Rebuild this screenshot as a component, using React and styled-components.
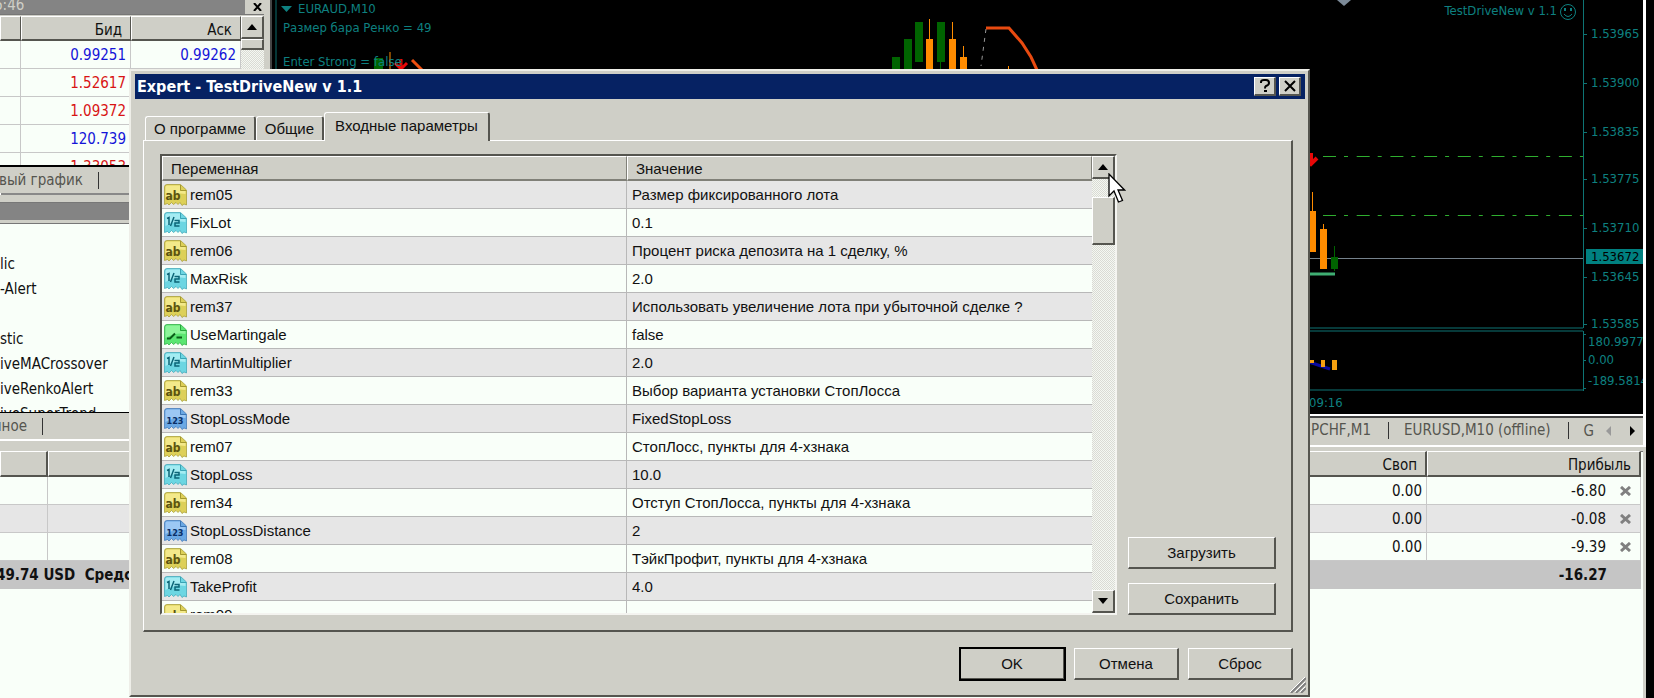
import React, { useState } from 'react';
import styled, { createGlobalStyle, css } from 'styled-components';

const quotes = [
  { bid: '0.99251', ask: '0.99262', up: true },
  { bid: '1.52617', up: false },
  { bid: '1.09372', up: false },
  { bid: '120.739', up: true },
  { bid: '1.33053', up: false },
];

const navItems = [
  '',
  'lic',
  '-Alert',
  '',
  'stic',
  'iveMACrossover',
  'iveRenkoAlert',
  'iveSuperTrend',
];

const params = [
  { type: 'ab', name: 'rem05', value: 'Размер фиксированного лота' },
  { type: 'half', name: 'FixLot', value: '0.1' },
  { type: 'ab', name: 'rem06', value: 'Процент риска депозита на 1 сделку, %' },
  { type: 'half', name: 'MaxRisk', value: '2.0' },
  {
    type: 'ab',
    name: 'rem37',
    value: 'Использовать увеличение лота при убыточной сделке ?',
  },
  { type: 'bool', name: 'UseMartingale', value: 'false' },
  { type: 'half', name: 'MartinMultiplier', value: '2.0' },
  { type: 'ab', name: 'rem33', value: 'Выбор варианта установки СтопЛосса' },
  { type: 'int', name: 'StopLossMode', value: 'FixedStopLoss' },
  { type: 'ab', name: 'rem07', value: 'СтопЛосс, пункты для 4-хзнака' },
  { type: 'half', name: 'StopLoss', value: '10.0' },
  {
    type: 'ab',
    name: 'rem34',
    value: 'Отступ СтопЛосса, пункты для 4-хзнака',
  },
  { type: 'int', name: 'StopLossDistance', value: '2' },
  { type: 'ab', name: 'rem08', value: 'ТэйкПрофит, пункты для 4-хзнака' },
  { type: 'half', name: 'TakeProfit', value: '4.0' },
  { type: 'ab', name: 'rem09', value: '' },
];

const orders = [
  { swap: '0.00', profit: '-6.80' },
  { swap: '0.00', profit: '-0.08' },
  { swap: '0.00', profit: '-9.39' },
];

const prices = [
  ['1.53965', 34],
  ['1.53900', 83],
  ['1.53835', 132],
  ['1.53775', 179],
  ['1.53710', 228],
  ['1.53645', 277],
  ['1.53585', 324],
];

const tabs = ['О программе', 'Общие', 'Входные параметры'];

const iconColors = {
  ab: ['#f3e98a', '#ddd058', '#a3982f', '#5c5410'],
  half: ['#a4ecf2', '#6cd6e2', '#3aa3b4', '#0c6577'],
  bool: ['#8df59a', '#5be672', '#27a63c', '#0a5c18'],
  int: ['#9cc8f4', '#6aa8e4', '#3a74b4', '#0a2f66'],
};
const iconLabels = { ab: 'ab', int: '123' };

function ParamIcon({ type }) {
  const [light, base, edge, ink] = iconColors[type];
  return (
    <svg width="23" height="22" viewBox="0 0 23 22" aria-hidden="true">
      <path
        d="M3 .5H16.500L22.500 6V21L20 20L18 21.500L16 18.500L14 20.500L12 18.500L9.500 20.500L7.500 18.500L5 21L3.500 19.500L.5 20.500V3Q.5.5 3 .5Z"
        fill={base}
        stroke={edge}
        strokeOpacity="0.7"
      />
      <path d="M3 1.500H16V7H21.500V10Q12 8 1.500 14V3Q1.500 1.500 3 1.500Z" fill={light} />
      <path d="M16.500 1V6.500H22" fill="none" stroke={edge} />
      {type === 'bool' && (
        <path d="M3 14.500H6L11 9.500M12.500 13.500H18" fill="none" stroke={ink} strokeWidth="2" />
      )}
      {type === 'half' && (
        <path
          d="M3 6.500L5 5.500V13M10 5L6.500 14M10.500 8.500H15V11H11V14H15.500"
          fill="none"
          stroke={ink}
          strokeWidth="1.500"
        />
      )}
      {(type === 'ab' || type === 'int') && (
        <text
          x={type === 'ab' ? 9 : 11}
          y="16"
          textAnchor="middle"
          fontFamily="DejaVu Sans Condensed, DejaVu Sans, sans-serif"
          fontWeight="bold"
          fontSize={type === 'ab' ? 12 : 9}
          fill={ink}
        >
          {iconLabels[type]}
        </text>
      )}
    </svg>
  );
}

function Arrow({ dir = 'up' }) {
  const shapes = {
    up: 'M0 6H10L5 0Z',
    down: 'M0 0H10L5 6Z',
  };
  return (
    <svg width="10" height="6" viewBox="0 0 10 6" aria-hidden="true">
      <path d={shapes[dir]} fill="#000" />
    </svg>
  );
}

function Chart() {
  return (
    <ChartSvg>
      {/* left edge of the chart */}
      <path d="M4 0V414" stroke="#0c6c6c" />
      <rect x="102" y="58" width="9" height="14" fill="#006400" />
      <path d="M118 52V72" stroke="#ff8c00" />
      <path d="M129 59V70M123 63L129 69L135 63" fill="none" stroke="#e80808" strokeWidth="3" />
      <path d="M140 60L152 72" stroke="#f05010" strokeWidth="3" />
      <g fill="#0e8080">
        <path d="M9 6H20L14.500 12Z" />
        <text x="26" y="13">EURAUD,M10</text>
        <text x="11" y="32">Размер бара Ренко = 49</text>
        <text x="11" y="66">Enter Strong = false</text>
      </g>

      <g fill="#006400">
        <rect x="620" y="57" width="8" height="14" />
        <rect x="632" y="39" width="8" height="32" />
        <rect x="643" y="22" width="8" height="40" />
        <rect x="665" y="22" width="8" height="40" />
        <rect x="668" y="62" width="1" height="9" />
      </g>
      <g fill="#ff8c00">
        <rect x="654" y="39" width="7" height="32" />
        <rect x="657" y="19" width="1" height="20" />
        <rect x="677" y="39" width="7" height="32" />
        <rect x="680" y="22" width="1" height="17" />
        <rect x="688" y="57" width="7" height="14" />
        <rect x="691" y="46" width="1" height="11" />
        <rect x="736" y="66" width="1" height="5" />
      </g>
      <path d="M714 29L709 66" stroke="#999" strokeDasharray="4 5" fill="none" />
      <path d="M714 28H737L750 43L759 57L765 70" stroke="#e84a10" strokeWidth="3" fill="none" />

      {/* frames of the main and the indicator window */}
      <g stroke="#0e7474" transform="translate(-60 0)">
        <line x1="64" x2="100%" y1="328" y2="328" />
        <line x1="64" x2="100%" y1="331" y2="331" />
        <line x1="64" x2="100%" y1="390" y2="390" />
      </g>

      {/* everything that is tied to the price scale */}
      <svg x="100%" y="0" overflow="visible">
        <path d="M-306 0H-292L-299 6Z" fill="#7c8a98" />
        <path
          d="M-320 156.500H-60M-320 215.500H-60"
          stroke="#2fae2f"
          strokeDasharray="13 8 4 8.700"
        />
        <path d="M-344 258.500H-60" stroke="#75828c" />
        <path d="M-344 274H-308" stroke="#3fae72" strokeWidth="3" />
        <path
          d="M-332 153V163M-339 157L-332 164L-326 158"
          stroke="#e80808"
          strokeWidth="4"
          fill="none"
        />
        <g fill="#ff8c00">
          <rect x="-335" y="211" width="8" height="41" />
          <rect x="-331" y="192" width="1" height="19" />
          <rect x="-323" y="229" width="7" height="40" />
          <rect x="-320" y="224" width="1" height="5" />
        </g>
        <g fill="#006400">
          <rect x="-312" y="257" width="7" height="12" />
          <rect x="-309" y="246" width="1" height="25" />
        </g>
        <path d="M-340 360L-328 364L-313 369" stroke="#0a0aa0" strokeWidth="3" fill="none" />
        <g fill="#f5a010">
          <rect x="-340" y="360" width="11" height="3" />
          <rect x="-322" y="360" width="4" height="7" />
          <rect x="-311" y="360" width="5" height="10" />
        </g>
        <g stroke="#0e7474" fill="none">
          <path d="M-59.500 0V328M-59.500 331V391" />
          {prices.map(([label, y]) => (
            <path key={label} d={`M-59 ${y}.500H-56`} />
          ))}
          <path d="M-59 334.500H-57M-59 360.500H-57M-59 388.500H-57" />
        </g>
        <rect x="-57" y="249" width="57" height="15" fill="#008080" />
        <g fill="#0e8080">
          {prices.map(([label, y]) => (
            <text key={label} x="-52" y={y + 4}>
              {label}
            </text>
          ))}
          <text x="-55" y="346">180.9977</text>
          <text x="-55" y="364">0.00</text>
          <text x="-55" y="385">-189.5814</text>
          <text x="-334" y="407">09:16</text>
          <text x="-86" y="15" textAnchor="end">
            TestDriveNew v 1.1
          </text>
        </g>
        <text x="-52" y="261" fill="#000">1.53672</text>
        <g fill="none" stroke="#0e8080">
          <circle cx="-75" cy="12" r="7.500" />
          <path d="M-79 14Q-75 19 -71 14" />
        </g>
        <path d="M-79 8H-77V11H-79ZM-73 8H-71V11H-73Z" fill="#0e8080" />
      </svg>
    </ChartSvg>
  );
}

export default function App() {
  const [activeTab, setActiveTab] = useState(2);

  return (
    <>
      <GlobalStyle />
      <Page>
        <Workspace>
          <Sidebar>
            <PanelTitle>
              <TitleText>6:46</TitleText>
              <PlainButton aria-label="Закрыть">
                <svg width="9" height="8" viewBox="0 0 9 8">
                  <path d="M1 0L8 8M8 0L1 8" stroke="#000" strokeWidth="2" />
                </svg>
              </PlainButton>
            </PanelTitle>
            <MarketWatch>
              <QuoteTable>
                <thead>
                  <tr>
                    <th aria-label="Символ" />
                    <th>Бид</th>
                    <th>Аск</th>
                  </tr>
                </thead>
                <tbody>
                  {quotes.map(quote => (
                    <QuoteRow key={quote.bid} $up={quote.up}>
                      <td />
                      <td>{quote.bid}</td>
                      <td>{quote.ask}</td>
                    </QuoteRow>
                  ))}
                </tbody>
              </QuoteTable>
              <ScrollBar>
                <ScrollButton aria-label="Вверх">
                  <Arrow />
                </ScrollButton>
                <Thumb $height={11} />
              </ScrollBar>
            </MarketWatch>
            <PanelTabs>
              <PanelTab $width={99}>вый график</PanelTab>
            </PanelTabs>
            <NavTitle />
            <NavList>
              {navItems.map((item, index) => (
                <li key={index}>{item}</li>
              ))}
            </NavList>
            <PanelTabs>
              <PanelTab $width={43}>нное</PanelTab>
            </PanelTabs>
          </Sidebar>
          <ChartColumn>
            <Chart />
            <ChartTabs>
              <PanelTab>PCHF,M1</PanelTab>
              <PanelTab>EURUSD,M10 (offline)</PanelTab>
              <ChartTabEnd>G</ChartTabEnd>
              <PlainButton aria-label="Назад">
                <svg width="5" height="10" viewBox="0 0 5 10">
                  <path d="M5 0V10L0 5Z" fill="#999" />
                </svg>
              </PlainButton>
              <PlainButton aria-label="Вперед">
                <svg width="5" height="10" viewBox="0 0 5 10">
                  <path d="M0 0V10L5 5Z" fill="#000" />
                </svg>
              </PlainButton>
            </ChartTabs>
          </ChartColumn>
        </Workspace>

        <Terminal>
          <OrderTable>
            <colgroup>
              <col width="48" />
              <col />
              <col width="300" />
              <col width="214" />
            </colgroup>
            <thead>
              <tr>
                <th />
                <th />
                <th>Своп</th>
                <th>Прибыль</th>
              </tr>
            </thead>
            <tbody>
              {orders.map(order => (
                <tr key={order.profit}>
                  <td />
                  <td />
                  <td>{order.swap}</td>
                  <td>
                    <Profit>
                      {order.profit}
                      <PlainButton aria-label="Закрыть ордер">
                        <svg width="11" height="10" viewBox="0 0 11 10">
                          <path d="M1 1L10 9M10 1L1 9" stroke="#808080" strokeWidth="3" />
                        </svg>
                      </PlainButton>
                    </Profit>
                  </td>
                </tr>
              ))}
            </tbody>
            <tfoot>
              <tr>
                <Balance colSpan="3">49.74 USD&nbsp; Средства</Balance>
                <td>
                  <Total>-16.27</Total>
                </td>
              </tr>
            </tfoot>
          </OrderTable>
        </Terminal>

        <Dialog role="dialog" aria-labelledby="dialog-title">
          <DialogTitle>
            <h1 id="dialog-title">Expert - TestDriveNew v 1.1</h1>
            <CaptionButton aria-label="Справка">
              <svg width="12" height="14" viewBox="0 0 12 14">
                <path
                  d="M2 4V3Q2 1 5 1H7Q10 1 10 4Q10 6 7 7Q6 7.500 6 9.500"
                  fill="none"
                  stroke="#000"
                  strokeWidth="2"
                />
                <rect x="5" y="11" width="3" height="2" />
              </svg>
            </CaptionButton>
            <CaptionButton aria-label="Закрыть">
              <svg width="12" height="12" viewBox="0 0 12 12">
                <path d="M1 1L11 11M11 1L1 11" stroke="#000" strokeWidth="2" />
              </svg>
            </CaptionButton>
          </DialogTitle>

          <TabList role="tablist">
            {tabs.map((tab, index) => (
              <Tab
                key={tab}
                role="tab"
                aria-selected={activeTab === index}
                $active={activeTab === index}
                onClick={() => setActiveTab(index)}
              >
                {tab}
              </Tab>
            ))}
          </TabList>

          <TabPanel role="tabpanel">
            <ListBox>
              <TableClip>
                <ParamTable>
                  <thead>
                    <tr>
                      <th>Переменная</th>
                      <th>Значение</th>
                    </tr>
                  </thead>
                  <tbody>
                    {params.map(param => (
                      <tr key={param.name}>
                        <td>
                          <ParamName>
                            <ParamIcon type={param.type} />
                            {param.name}
                          </ParamName>
                        </td>
                        <td>{param.value}</td>
                      </tr>
                    ))}
                  </tbody>
                </ParamTable>
              </TableClip>
              <ScrollBar>
                <ScrollButton aria-label="Вверх">
                  <Arrow />
                </ScrollButton>
                <Track />
                <Thumb $height={48} />
                <Spacer />
                <ScrollButton aria-label="Вниз">
                  <Arrow dir="down" />
                </ScrollButton>
              </ScrollBar>
            </ListBox>
            <SideButtons>
              <Button>Загрузить</Button>
              <Button>Сохранить</Button>
            </SideButtons>
          </TabPanel>

          <DialogFooter>
            <Button $primary>OK</Button>
            <Button>Отмена</Button>
            <Button>Сброс</Button>
          </DialogFooter>
          <Grip width="16" height="16" viewBox="0 0 16 16">
            <path d="M1 16L16 1M6 16L16 6M11 16L16 11" stroke="#808080" strokeWidth="2" />
            <path d="M0 15L15 0M5 15L15 5M10 15L15 10" stroke="#fff" />
          </Grip>
        </Dialog>

        <Cursor width="18" height="31" viewBox="0 0 18 31">
          <path
            d="M1 1V23L6 18L10.500 29L14.500 27.500L10 17H16.500Z"
            fill="#fff"
            stroke="#000"
            strokeWidth="1.300"
          />
        </Cursor>
      </Page>
    </>
  );
}

const face = '#cfcfc7';
const paper = '#f9fff9';
const tahoma = "'DejaVu Sans Condensed', 'DejaVu Sans', sans-serif";
const sans = "'Liberation Sans', Arial, sans-serif";

const GlobalStyle = createGlobalStyle`
  * {
    box-sizing: border-box;
  }

  body {
    margin: 0;
    overflow: hidden;
    background: #000;
    color: #111;
    font-family: ${tahoma};
    font-size: 15px;
  }

  button {
    font: inherit;
    color: inherit;
  }

  table {
    width: 100%;
    border-collapse: separate;
    border-spacing: 0;
    table-layout: fixed;
  }

  th {
    font-weight: normal;
  }
`;

const raised = css`
  background: ${face};
  border: solid;
  border-width: 1px 2px 2px 1px;
  border-color: #fff #55554f #55554f #fff;
`;

const Page = styled.div`
  position: relative;
  display: flex;
  flex-direction: column;
  height: 100vh;
  padding-right: 8px;
`;

const Workspace = styled.div`
  display: flex;
  background: ${face};
`;

const Sidebar = styled.aside`
  display: flex;
  flex-direction: column;
  width: 272px;
  border-right: 2px solid #444;
`;

const PanelTitle = styled.div`
  display: flex;
  justify-content: space-between;
  align-items: center;
  height: 14px;
  padding-right: 8px;
  background: linear-gradient(#848484, #848484) 0 0 / 245px 100% no-repeat;
  line-height: 14px;
`;

const TitleText = styled.span`
  margin: -5px 0 0 -6px;
  color: ${face};
`;

const PlainButton = styled.button`
  display: flex;
  padding: 0;
  border: 0;
  background: none;
`;

const MarketWatch = styled.div`
  display: flex;
  height: 153px;
  margin-right: 6px;
  padding-top: 1px;
  border-top: 1px solid #777;
  border-bottom: 2px solid #000;
  overflow: hidden;
`;

const QuoteTable = styled.table`
  flex: 1;
  background: ${paper};

  th {
    ${raised}
    border-right-width: 1px;
    height: 25px;
    padding: 4px 8px 0;
    text-align: right;
  }

  td {
    height: 28px;
    padding: 0 4px;
    border: solid #c8c8c8;
    border-width: 0 1px 1px 0;
    text-align: right;
  }

  th:first-child {
    width: 21px;
  }
`;

const QuoteRow = styled.tr`
  color: ${({ $up }) => ($up ? '#1414d8' : '#d81414')};
`;

const ScrollBar = styled.div`
  display: flex;
  flex-direction: column;
  width: 23px;
  background: repeating-conic-gradient(#f4f8f2 0% 25%, #dadad4 0% 50%) 0 0 / 2px 2px;
`;

const ScrollButton = styled.button`
  ${raised}
  display: flex;
  align-items: center;
  justify-content: center;
  width: 100%;
  height: 23px;
  padding: 0;
`;

const Track = styled.div`
  height: 18px;
`;

const Thumb = styled.div`
  ${raised}
  height: ${({ $height }) => $height}px;
`;

const Spacer = styled.div`
  flex: 1;
`;

const PanelTabs = styled.div`
  display: flex;
  align-items: center;
  height: 28px;
  border-bottom: 2px solid #fff;
  color: #55554f;
`;

/* with a width the label keeps to the right and runs out on the left */
const PanelTab = styled.span`
  display: flex;
  justify-content: flex-end;
  width: ${({ $width }) => ($width ? `${$width}px` : 'auto')};
  padding-right: 15px;
  border-right: 1px solid #333;
  line-height: 17px;
  white-space: nowrap;

  & + & {
    padding-left: 15px;
  }
`;

const NavTitle = styled.div`
  height: 28px;
  border: solid ${face};
  border-width: 7px 0 3px;
  background: #848484;
  box-shadow: 0 -3px 0 -1px #888, inset 0 1px 0 #777;
`;

const NavList = styled.ul`
  height: 190px;
  margin: 0;
  padding: 3px 0 0;
  border-top: 1px solid #777;
  border-bottom: 1px solid #000;
  background: ${paper};
  list-style: none;
  overflow: hidden;

  li {
    height: 25px;
    line-height: 25px;
  }
`;

const ChartColumn = styled.main`
  flex: 1;
  min-width: 0;
  border-right: 3px solid #fff;
`;

const ChartSvg = styled.svg`
  display: block;
  width: 100%;
  height: 414px;
  background: #000;
  font-family: ${tahoma};
  font-size: 13px;
`;

const ChartTabs = styled.div`
  display: flex;
  align-items: center;
  justify-content: flex-end;
  height: 33px;
  padding: 0 8px 0 0;
  border-top: 2px solid #fff;
  border-bottom: 2px solid #fff;
  box-shadow: inset 0 2px 0 #444;
  color: #55554f;

  ${PanelTab} {
    padding-right: 17px;
  }

  ${PlainButton} + ${PlainButton} {
    margin-left: 19px;
  }
`;

const ChartTabEnd = styled.span`
  padding: 0 12px 0 15px;
`;

const Terminal = styled.section`
  flex: 1;
  padding-right: 2px;
  border: solid ${face};
  border-width: 4px 3px 0 0;
  background: ${paper};
  box-shadow: inset 0 1px 0 #777;
`;

const OrderTable = styled.table`
  th {
    ${raised}
    height: 26px;
    padding: 3px 8px 0;
    text-align: right;
  }

  td {
    height: 28px;
    padding: 0 4px;
    border: solid #c8c8c8;
    border-width: 0 1px 1px 0;
    text-align: right;
  }

  tbody tr:nth-child(2) {
    background: #e6e6e6;
  }

  tfoot td {
    border: 0;
    background: #c5c5c5;
    font-weight: bold;
  }
`;

const Profit = styled.div`
  display: flex;
  justify-content: flex-end;
  align-items: center;
  gap: 14px;
  padding-right: 5px;
`;

const Total = styled.span`
  padding-right: 30px;
`;

const Balance = styled.td`
  && {
    padding: 0;
    text-align: left;
    text-indent: -4px;
  }
`;

/* the window floats over the workspace */
const Dialog = styled.div`
  position: absolute;
  top: 69px;
  right: 344px;
  bottom: 1px;
  left: 129px;
  display: flex;
  flex-direction: column;
  padding: 3px 3px 15px 4px;
  background: ${face};
  border: solid;
  border-width: 2px;
  border-color: #eeeee8 #55554f #55554f #eeeee8;
  font-family: ${sans};
`;

const DialogTitle = styled.header`
  display: flex;
  align-items: center;
  gap: 3px;
  height: 25px;
  padding: 0 4px 0 2px;
  background: #062263;

  h1 {
    flex: 1;
    margin: 0;
    color: #fff;
    font-family: ${tahoma};
    font-size: 16px;
    line-height: 25px;
  }
`;

const CaptionButton = styled.button`
  ${raised}
  display: flex;
  align-items: center;
  justify-content: center;
  width: 22px;
  height: 19px;
  padding: 0;
`;

const TabList = styled.div`
  display: flex;
  align-items: flex-end;
  margin: 13px 0 0 10px;
`;

const Tab = styled.button`
  height: 24px;
  padding: 0 8px;
  border: solid;
  border-width: 1px 2px 0 1px;
  border-color: #fff #55554f #fff #fff;
  border-radius: 3px 3px 0 0;
  background: ${face};

  ${({ $active }) =>
    $active &&
    css`
      position: relative;
      height: 29px;
      margin-bottom: -1px;
      padding: 0 10px 4px;
    `}
`;

const TabPanel = styled.div`
  ${raised}
  display: flex;
  flex: 1;
  gap: 11px;
  min-height: 0;
  margin: 0 12px 0 8px;
  padding: 13px 15px 15px 16px;
`;

const ListBox = styled.div`
  display: flex;
  flex: 1;
  border: solid;
  border-width: 2px;
  border-color: #55554f #f4f4f0 #f4f4f0 #55554f;
  background: ${paper};
`;

const TableClip = styled.div`
  flex: 1;
  overflow: hidden;
`;

const ParamTable = styled.table`
  th {
    ${raised}
    border-width: 1px 1px 2px;
    border-color: #fff #808078 #808078 #fff;
    height: 25px;
    padding: 1px 8px 0;
    text-align: left;
  }

  th:first-child {
    width: 465px;
  }

  td {
    height: 28px;
    padding: 0 0 0 5px;
    border-bottom: 1px solid #b8b8b8;
    white-space: nowrap;
  }

  td:first-child {
    padding: 0 0 0 2px;
    border-right: 1px solid #b8b8b8;
  }

  tbody tr:nth-child(odd) {
    background: #e6e6e6;
  }
`;

const ParamName = styled.div`
  display: flex;
  align-items: center;
  gap: 3px;
`;

const SideButtons = styled.div`
  display: flex;
  flex-direction: column;
  justify-content: flex-end;
  gap: 14px;
  width: 148px;
`;

const Button = styled.button`
  ${raised}
  height: 32px;
  padding: 0 8px;
  ${({ $primary }) => $primary && 'outline: 2px solid #000; outline-offset: -1px;'}
`;

const DialogFooter = styled.footer`
  display: flex;
  justify-content: flex-end;
  gap: 9px;
  margin: 16px 12px 0 0;

  ${Button} {
    width: 105px;
  }
`;

const Grip = styled.svg`
  position: absolute;
  right: 2px;
  bottom: 2px;
`;

const Cursor = styled.svg`
  position: absolute;
  top: 173px;
  left: 1108px;
`;
